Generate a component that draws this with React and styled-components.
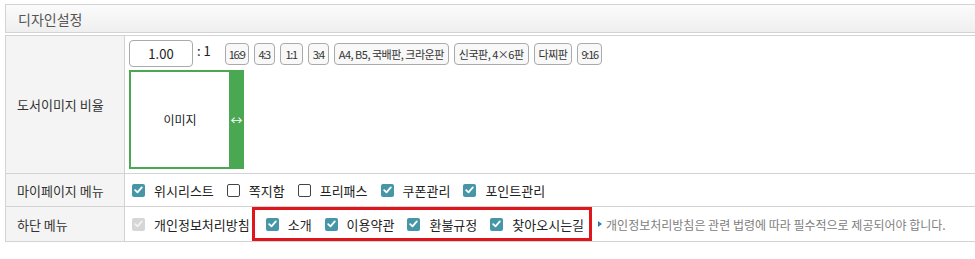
import React from 'react'
import styled, { createGlobalStyle } from 'styled-components'

const GlobalStyle = createGlobalStyle`
  body {
    margin: 0;
    background: #fff;
    font-family: "Noto Sans CJK KR", "Noto Sans", sans-serif;
    color: #333;
    overflow: hidden;
  }
`

const Page = styled.div`
  padding: 4px 0 0 5px;
  width: 985px;
`

const Header = styled.div`
  height: 27px;
  border: 1px solid #d3d3d3;
  background: linear-gradient(#fbfbfb, #efefef);
  display: flex;
  align-items: center;
  padding-left: 12px;
  font-size: 14px;
  color: #555;
`

const Table = styled.div`
  margin-top: 2px;
  border-top: 1px solid #d3d3d3;
`

const Row = styled.div`
  display: grid;
  grid-template-columns: 119px 1fr;
  border-bottom: 1px solid #d3d3d3;
  border-left: 1px solid #d3d3d3;
  min-height: ${p => p.$h}px;
`

const Label = styled.div`
  background: #f4f4f4;
  border-right: 1px solid #d3d3d3;
  display: flex;
  align-items: center;
  padding-left: 11px;
  font-size: 13px;
  color: #333;
`

const Cell = styled.div`
  padding: ${p => p.$pad || '0 0 0 7px'};
  display: flex;
  align-items: center;
`

const Stack = styled.div`
  display: flex;
  flex-direction: column;
  gap: 3px;
`

const RatioBar = styled.div`
  display: flex;
  align-items: center;
`

const RatioInput = styled.div`
  width: 62px;
  height: 25px;
  border: 1px solid #aaa;
  border-radius: 4px;
  display: flex;
  align-items: center;
  justify-content: center;
  font-size: 13px;
  color: #222;
`

const Colon = styled.span`
  font-size: 13px;
  color: #222;
  margin: -6px 14px 0 4px;
`

const Presets = styled.div`
  display: flex;
  gap: 5px;
`

const Preset = styled.button`
  height: 22px;
  padding: 0 ${p => p.$px || 4}px;
  border: 1px solid #aaa;
  border-radius: 4px;
  background: #f8f8f8;
  font-family: "Noto Sans CJK KR", "Noto Sans", sans-serif;
  font-size: 11px;
  letter-spacing: ${p => p.$ls || '-0.5px'};
  color: #333;
  display: flex;
  align-items: center;
  cursor: pointer;
`

const ImageBox = styled.div`
  display: flex;
  width: 115px;
  height: 99px;
  background: #4aa852;
  padding: 2px 0 2px 2px;
  box-sizing: border-box;
`

const ImageArea = styled.div`
  width: 98px;
  background: #fff;
  display: flex;
  align-items: center;
  justify-content: center;
  font-size: 12px;
  color: #222;
`

const Handle = styled.div`
  flex: 1;
  display: flex;
  align-items: center;
  justify-content: center;
  color: #fff;
  font-size: 12px;
`

const Options = styled.div`
  display: flex;
  align-items: center;
  gap: 13px;
`

const Option = styled.label`
  display: flex;
  align-items: center;
  gap: 9px;
  font-size: 13px;
  color: #222;
`

const Box = styled.span`
  width: 13px;
  height: 13px;
  box-sizing: border-box;
  border-radius: 2px;
  display: inline-flex;
  align-items: center;
  justify-content: center;
  background: ${p => (p.$state === 'on' ? '#4597a8' : p.$state === 'disabled' ? '#d6d6d6' : '#fff')};
  border: ${p => (p.$state === 'off' ? '1px solid #444' : 'none')};
`

const Highlight = styled.div`
  display: flex;
  align-items: center;
  gap: 13px;
  border: 3px solid #e0161c;
  height: 28px;
  padding: 0 5px 0 11px;
  margin: 0 6px 0 2px;
`

const Hint = styled.span`
  display: flex;
  align-items: center;
  gap: 4px;
  font-size: 12px;
  color: #808080;
`

const Arrow = styled.span`
  width: 0;
  height: 0;
  border-top: 3px solid transparent;
  border-bottom: 3px solid transparent;
  border-left: 4px solid #2f7fb0;
`

function Check({ state }) {
  return (
    <Box $state={state}>
      {state !== 'off' && (
        <svg width="9" height="8" viewBox="0 0 9 8">
          <path d="M1.2 4.2 L3.5 6.4 L7.8 1.4" fill="none" stroke={state === 'disabled' ? '#f2f2f2' : '#fff'} strokeWidth="1.8" strokeLinecap="round" strokeLinejoin="round" />
        </svg>
      )}
    </Box>
  )
}

function Item({ state, children }) {
  return (
    <Option>
      <Check state={state} />
      {children}
    </Option>
  )
}

const presets = [
  { t: '16:9', px: 3, ls: '-1.4px' },
  { t: '4:3', px: 4, ls: '-1.4px' },
  { t: '1:1', px: 5, ls: '-1.4px' },
  { t: '3:4', px: 4, ls: '-1.4px' },
  { t: 'A4, B5, 국배판, 크라운판', px: 4 },
  { t: '신국판, 4×6판', px: 4 },
  { t: '다찌판', px: 4 },
  { t: '9:16', px: 3, ls: '-1.2px' },
]

export default function App() {
  return (
    <Page>
      <GlobalStyle />
      <Header>디자인설정</Header>
      <Table>
        <Row $h={137}>
          <Label>도서이미지 비율</Label>
          <Cell $pad="4px 0 4px 4px">
            <Stack>
              <RatioBar>
                <RatioInput>1.00</RatioInput>
                <Colon>: 1</Colon>
                <Presets>
                  {presets.map(p => (
                    <Preset key={p.t} $px={p.px} $ls={p.ls}>{p.t}</Preset>
                  ))}
                </Presets>
              </RatioBar>
              <ImageBox>
                <ImageArea>이미지</ImageArea>
                <Handle>↔</Handle>
              </ImageBox>
            </Stack>
          </Cell>
        </Row>
        <Row $h={32}>
          <Label>마이페이지 메뉴</Label>
          <Cell>
            <Options>
              <Item state="on">위시리스트</Item>
              <Item state="off">쪽지함</Item>
              <Item state="off">프리패스</Item>
              <Item state="on">쿠폰관리</Item>
              <Item state="on">포인트관리</Item>
            </Options>
          </Cell>
        </Row>
        <Row $h={32}>
          <Label>하단 메뉴</Label>
          <Cell>
            <Item state="disabled">개인정보처리방침</Item>
            <Highlight>
              <Item state="on">소개</Item>
              <Item state="on">이용약관</Item>
              <Item state="on">환불규정</Item>
              <Item state="on">찾아오시는길</Item>
            </Highlight>
            <Hint>
              <Arrow />
              개인정보처리방침은 관련 법령에 따라 필수적으로 제공되어야 합니다.
            </Hint>
          </Cell>
        </Row>
      </Table>
    </Page>
  )
}
